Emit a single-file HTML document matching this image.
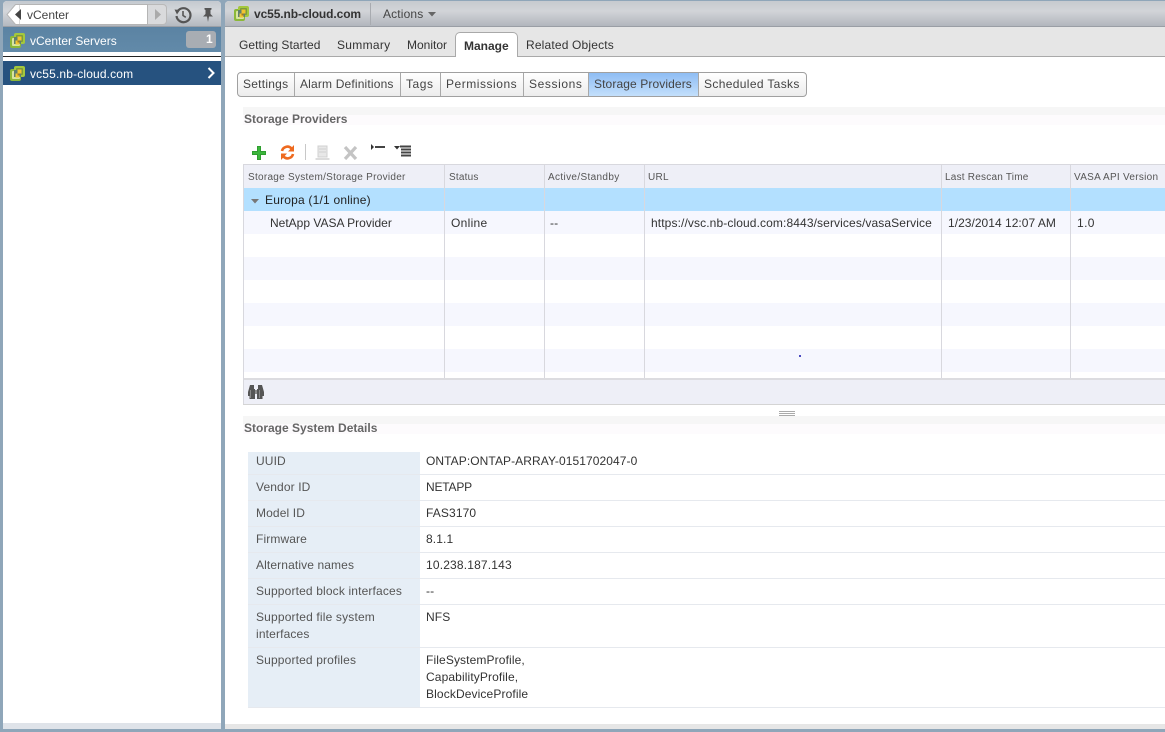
<!DOCTYPE html>
<html><head><meta charset="utf-8"><style>
html,body{margin:0;padding:0;width:1165px;height:732px;overflow:hidden;background:#8fa6b9;font-family:"Liberation Sans",Arial,sans-serif;font-size:12px;color:#333}
div,span,svg{position:absolute;white-space:nowrap;box-sizing:border-box}
.t{letter-spacing:.12px;line-height:14px;height:14px}
.h{font-size:10px;letter-spacing:.28px;color:#555;line-height:12px}
.v{position:absolute;width:1px;background:#d8d8de}
.s{position:absolute;width:1px;top:0;height:24px;background:#a8a8a8}
.l{left:256px;color:#555}
.r{left:426px;color:#333}
.hl{position:absolute;left:248px;right:0;height:1px;background:#e6e9ee}
</style></head><body>
<svg width="0" height="0" style="position:absolute"><defs>
<g id="vc"><rect x="0" y="3" width="11" height="12" rx="2" fill="#8cb838"/><rect x="4" y="0" width="11" height="11" rx="2" fill="#a4c83c"/><rect x="2" y="5" width="8" height="8" rx="1" fill="#d8e4a0"/><rect x="6" y="2" width="7" height="7" rx="1" fill="#7d9a3c"/><rect x="4" y="4" width="7" height="7" fill="#5f7f70"/><path d="M7.500 3.500h4v4h-2v4h-4v-4h2z" fill="#f2c531"/><path d="M7.500 7.500h2v2h-2z" fill="#a67c20"/></g>
</defs></svg>

<!-- left panel -->
<div style="left:3px;top:1px;width:218px;height:728px;background:#fff;border-radius:4px 4px 3px 3px;overflow:hidden"></div>
<div style="left:3px;top:1px;width:218px;height:26px;background:linear-gradient(#c4c9cf,#d4d7db 40%,#b4b9c0);border-radius:4px 4px 0 0;border-bottom:1px solid #9a9fa6"></div>
<div style="left:18px;top:4px;width:130px;height:21px;background:#fff;border:1px solid #b5b5b5;border-left:none"></div>
<svg style="left:6px;top:4px" width="14" height="21"><path d="M14 .5H9.500L1 10.500l8.500 10H14z" fill="#fff" stroke="#b5b5b5"/></svg>
<svg style="left:15px;top:9px" width="7" height="11"><path d="M6 0v11L0 5.500z" fill="#444"/></svg>
<div class="t" style="left:27px;top:8px;letter-spacing:0;color:#444">vCenter</div>
<div style="left:148px;top:4px;width:19px;height:21px;background:#d9dadc;border:1px solid #b9b9b9;border-left:none;border-radius:0 4px 4px 0"></div>
<svg style="left:155px;top:9px" width="7" height="11"><path d="M0 0v11l6-5.500z" fill="#aaa"/></svg>
<svg style="left:174px;top:6px" width="18" height="18"><path d="M3.500 5.500A7 7 0 1 1 2.500 10" fill="none" stroke="#555" stroke-width="2.200"/><path d="M0.500 3.500L6 4 3 8.500z" fill="#555"/><path d="M9 5v4.500l2.800 1.800" fill="none" stroke="#555" stroke-width="1.600"/></svg>
<svg style="left:202px;top:8px" width="12" height="14"><path d="M2.500 0h7v1.500L8.500 2v4l2.500 2.500H7L6 14 5 8.500H1L3.500 6V2l-1-.5z" fill="#555"/></svg>
<div style="left:3px;top:27px;width:218px;height:25px;background:linear-gradient(#5b83a3,#628aa9)"></div>
<svg style="left:10px;top:33px" width="15" height="15"><use href="#vc"/></svg>
<div class="t" style="left:30px;top:34px;color:#fff;letter-spacing:0">vCenter Servers</div>
<div style="left:186px;top:31px;width:30px;height:17px;background:#a8adb3;border-radius:3px"></div>
<div style="left:206px;top:32px;color:#fff;font-weight:bold;font-size:12px;line-height:14px">1</div>
<div style="left:3px;top:56px;width:218px;height:1px;background:#222"></div>
<div style="left:3px;top:61px;width:218px;height:24px;background:#26527f"></div>
<svg style="left:10px;top:66px" width="15" height="15"><use href="#vc"/></svg>
<div class="t" style="left:30px;top:67px;color:#fff;letter-spacing:.15px">vc55.nb-cloud.com</div>
<svg style="left:207px;top:67px" width="9" height="12"><path d="M1.500 1l5 5-5 5" fill="none" stroke="#fff" stroke-width="2"/></svg>
<div style="left:3px;top:723px;width:218px;height:6px;background:#dfe3e9"></div>

<!-- right panel -->
<div style="left:225px;top:1px;width:940px;height:728px;background:#fff;border-radius:4px 0 0 3px;overflow:hidden"></div>
<div style="left:225px;top:1px;width:940px;height:26px;background:linear-gradient(#c6cacf,#d2d4d8 40%,#b2b6bd);border-bottom:1px solid #9a9ea5;border-radius:4px 0 0 0"></div>
<svg style="left:234px;top:6px" width="15" height="15"><use href="#vc"/></svg>
<div style="left:254px;top:7px;font-size:12px;font-weight:bold;color:#333;line-height:14px;letter-spacing:-.1px">vc55.nb-cloud.com</div>
<div style="left:370px;top:3px;width:1px;height:22px;background:#a8abb0"></div>
<div class="t" style="left:383px;top:7px;color:#444;letter-spacing:.15px">Actions</div>
<svg style="left:428px;top:12px" width="8" height="5"><path d="M0 0h8L4 4.500z" fill="#666"/></svg>

<div style="left:225px;top:27px;width:940px;height:30px;background:#e6e6e6;border-bottom:1px solid #a9a9a9"></div>
<div class="t" style="left:239px;top:38px;letter-spacing:.05px">Getting Started</div>
<div class="t" style="left:337px;top:38px;letter-spacing:.3px">Summary</div>
<div class="t" style="left:407px;top:38px;letter-spacing:0">Monitor</div>
<div style="left:455px;top:32px;width:63px;height:25px;background:#fff;border:1px solid #a9a9a9;border-bottom:none;border-radius:5px 5px 0 0"></div>
<div style="left:464px;top:39px;font-weight:bold;color:#333;font-size:12px;line-height:14px">Manage</div>
<div class="t" style="left:526px;top:38px;letter-spacing:.17px">Related Objects</div>

<!-- sub tabs -->
<div style="left:237px;top:72px;width:570px;height:25px;background:linear-gradient(#fff,#ececec);border:1px solid #a0a0a0;border-radius:4px;overflow:hidden">
<div style="left:350px;top:0;width:110px;height:23px;background:linear-gradient(#8fbdf4,#c3dffb)"></div>
<span class="s" style="left:56px"></span><span class="s" style="left:162px"></span><span class="s" style="left:202px"></span><span class="s" style="left:285px"></span><span class="s" style="left:350px"></span><span class="s" style="left:460px"></span>
</div>
<div class="t" style="left:243px;top:77px;color:#444;letter-spacing:.25px">Settings</div>
<div class="t" style="left:300px;top:77px;color:#444;letter-spacing:.17px">Alarm Definitions</div>
<div class="t" style="left:406px;top:77px;color:#444;letter-spacing:.55px">Tags</div>
<div class="t" style="left:446px;top:77px;color:#444;letter-spacing:.53px">Permissions</div>
<div class="t" style="left:529px;top:77px;color:#444;letter-spacing:.6px">Sessions</div>
<div class="t" style="left:594px;top:77px;color:#444;letter-spacing:.11px">Storage Providers</div>
<div class="t" style="left:704px;top:77px;color:#444;letter-spacing:.35px">Scheduled Tasks</div>

<!-- Storage Providers -->
<div style="left:243px;top:107px;width:922px;height:8px;background:#f6f6f6"></div>
<div style="left:243px;top:115px;width:922px;height:10px;background:#fdfbfd"></div>
<div style="left:244px;top:112px;font-weight:bold;color:#666;font-size:12px;line-height:14px">Storage Providers</div>

<!-- toolbar -->
<svg style="left:252px;top:146px" width="14" height="14"><path d="M5 0h4v5h5v4H9v5H5V9H0V5h5z" fill="#2f9e2f"/><path d="M6 1h2v5h5v2H8v5H6V8H1V6h5z" fill="#3cb63c"/></svg>
<svg style="left:280px;top:145px" width="15" height="15"><path d="M2 6a5.500 5.500 0 0 1 9.500-2.500" fill="none" stroke="#ee6a1f" stroke-width="2.600"/><path d="M13 9a5.500 5.500 0 0 1-9.500 2.500" fill="none" stroke="#ee6a1f" stroke-width="2.600"/><path d="M14 0v6.500H8z M1 15V8.500h6z" fill="#ee6a1f"/></svg>
<div style="left:305px;top:144px;width:1px;height:16px;background:#c8c8c8"></div>
<svg style="left:315px;top:145px" width="15" height="16"><rect x="3" y="1" width="9" height="11" fill="#e8e8e8" stroke="#d0d0d0"/><path d="M4 4h7M4 7h7" stroke="#cfcfcf"/><rect x="0.500" y="13" width="14" height="2" fill="#dcdcdc"/></svg>
<svg style="left:343px;top:146px" width="15" height="14"><path d="M2 1l11 12M13 1L2 13" stroke="#c4c4c4" stroke-width="3.200"/></svg>
<svg style="left:370px;top:144px" width="16" height="10"><path d="M1 0v6l3-3z" fill="#333"/><rect x="5" y="2" width="10" height="2" fill="#444"/></svg>
<svg style="left:394px;top:145px" width="17" height="13"><path d="M0 1h6L3 4.500z" fill="#333"/><path d="M6 1.500h11M7 4.500h10M7 7.500h10M7 10.500h10" stroke="#444" stroke-width="2"/></svg>

<!-- table -->
<div style="left:243px;top:164px;width:922px;height:241px;border:1px solid #d8d8de;border-right:none"></div>
<div style="left:244px;top:165px;width:921px;height:23px;background:#eeeff7"></div>
<div style="left:244px;top:188px;width:921px;height:23px;background:#b3e0ff"></div>
<div style="left:244px;top:211px;width:921px;height:23px;background:#f6f7fe"></div>
<div style="left:244px;top:257px;width:921px;height:23px;background:#f6f7fe"></div>
<div style="left:244px;top:303px;width:921px;height:23px;background:#f6f7fe"></div>
<div style="left:244px;top:349px;width:921px;height:23px;background:#f6f7fe"></div>
<div class="v" style="left:444px;top:165px;height:213px"></div>
<div class="v" style="left:544px;top:165px;height:213px"></div>
<div class="v" style="left:644px;top:165px;height:213px"></div>
<div class="v" style="left:941px;top:165px;height:213px"></div>
<div class="v" style="left:1070px;top:165px;height:213px"></div>
<div style="left:244px;top:378px;width:921px;height:2px;background:#dcdce0"></div>
<div style="left:244px;top:380px;width:921px;height:24px;background:#eeeff7"></div>
<div style="left:243px;top:404px;width:922px;height:1px;background:#d4d4d4"></div>

<div class="h" style="left:248px;top:172px">Storage System/Storage Provider</div>
<div class="h" style="left:449px;top:172px;letter-spacing:.2px">Status</div>
<div class="h" style="left:548px;top:172px;letter-spacing:.35px">Active/Standby</div>
<div class="h" style="left:648px;top:172px">URL</div>
<div class="h" style="left:945px;top:172px;letter-spacing:.22px">Last Rescan Time</div>
<div class="h" style="left:1074px;top:172px">VASA API Version</div>

<svg style="left:251px;top:199px" width="8" height="5"><path d="M0 0h8L4 4.500z" fill="#777"/></svg>
<div class="t" style="left:265px;top:193px;color:#222;letter-spacing:.2px">Europa (1/1 online)</div>
<div class="t" style="left:270px;top:216px;letter-spacing:0">NetApp VASA Provider</div>
<div class="t" style="left:451px;top:216px;letter-spacing:.3px">Online</div>
<div class="t" style="left:550px;top:216px">--</div>
<div class="t" style="left:651px;top:216px;letter-spacing:.11px">https://vsc.nb-cloud.com:8443/services/vasaService</div>
<div class="t" style="left:948px;top:216px;letter-spacing:.03px">1/23/2014 12:07 AM</div>
<div class="t" style="left:1077px;top:216px;letter-spacing:.4px">1.0</div>
<div style="left:799px;top:355px;width:2px;height:2px;background:#4a4ac0"></div>

<svg style="left:248px;top:385px" width="16" height="15"><path d="M2 0h4v4h1v10H1.500V11H0V7z" fill="#555"/><path d="M14 0h-4v4H9v10h5.500V11H16V7z" fill="#555"/><rect x="7" y="5" width="2" height="4" fill="#8a8a8a"/><path d="M2.500 5v8M11.500 5v8" stroke="#888"/></svg>

<!-- splitter -->
<div style="left:779px;top:411px;width:16px;height:1px;background:#aaa"></div>
<div style="left:779px;top:413px;width:16px;height:1px;background:#aaa"></div>
<div style="left:779px;top:415px;width:16px;height:1px;background:#aaa"></div>

<!-- details -->
<div style="left:243px;top:416px;width:922px;height:8px;background:#f6f6f6"></div>
<div style="left:243px;top:424px;width:922px;height:10px;background:#fdfbfd"></div>
<div style="left:244px;top:421px;font-weight:bold;color:#666;font-size:12px;line-height:14px">Storage System Details</div>

<div style="left:248px;top:452px;width:172px;height:256px;background:#e6eef6"></div>
<div class="hl" style="top:474px"></div>
<div class="hl" style="top:500px"></div>
<div class="hl" style="top:526px"></div>
<div class="hl" style="top:552px"></div>
<div class="hl" style="top:578px"></div>
<div class="hl" style="top:604px"></div>
<div class="hl" style="top:647px"></div>
<div class="hl" style="top:707px"></div>

<div class="t l" style="top:454px">UUID</div><div class="t r" style="top:454px;letter-spacing:.08px">ONTAP:ONTAP-ARRAY-0151702047-0</div>
<div class="t l" style="top:480px">Vendor ID</div><div class="t r" style="top:480px;letter-spacing:-.2px">NETAPP</div>
<div class="t l" style="top:506px">Model ID</div><div class="t r" style="top:506px">FAS3170</div>
<div class="t l" style="top:532px">Firmware</div><div class="t r" style="top:532px">8.1.1</div>
<div class="t l" style="top:558px">Alternative names</div><div class="t r" style="top:558px;letter-spacing:.17px">10.238.187.143</div>
<div class="t l" style="top:584px;letter-spacing:.15px">Supported block interfaces</div><div class="t r" style="top:584px">--</div>
<div class="t l" style="top:610px;letter-spacing:.17px">Supported file system</div><div class="t r" style="top:610px">NFS</div>
<div class="t l" style="top:627px;letter-spacing:.15px">interfaces</div>
<div class="t l" style="top:653px;letter-spacing:.15px">Supported profiles</div><div class="t r" style="top:653px">FileSystemProfile,</div>
<div class="t r" style="top:670px">CapabilityProfile,</div>
<div class="t r" style="top:687px">BlockDeviceProfile</div>

<div style="left:225px;top:724px;width:940px;height:5px;background:#e6e6e6"></div>
</body></html>
